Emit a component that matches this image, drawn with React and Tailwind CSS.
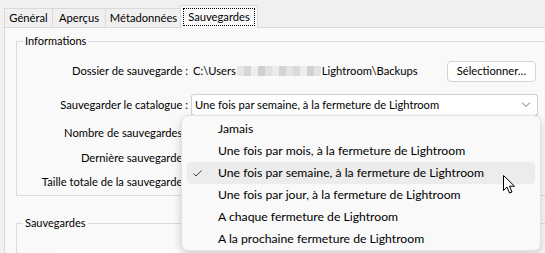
import React from 'react';

const font = { fontFamily: 'Lato, "Noto Sans", sans-serif' };

const tabs = [
    { t: 'Général', w: 'w-[48px]' },
    { t: 'Aperçus', w: 'w-[53px]' },
    { t: 'Métadonnées', w: 'w-[76px]' },
];

const options = [
    'Jamais',
    'Une fois par mois, à la fermeture de Lightroom',
    'Une fois par semaine, à la fermeture de Lightroom',
    'Une fois par jour, à la fermeture de Lightroom',
    'A chaque fermeture de Lightroom',
    'A la prochaine fermeture de Lightroom',
];

// pixelated bit hiding the user name
const blur = ['#e6e6e6', '#d6d6d6', '#eeeeee', '#cfcfcf', '#e1e1e1', '#ebebeb', '#d4d4d4', '#e4e4e4', '#dadada', '#ededed', '#d2d2d2', '#e3e3e3'];

function Row({ label, children, className }) {
    return (
        <div className={`flex items-center h-[22px] ${className}`}>
            <div className="w-[176px] shrink-0 text-right pr-[5px] whitespace-nowrap">{label}</div>
            {children}
        </div>
    );
}

export default function App() {
    return (
        <div className="relative w-[545px] h-[253px] overflow-hidden bg-[#f0f0f0] text-[11.2px] text-black leading-[16px]" style={font}>
            {/* tab strip */}
            <div className="flex items-end h-[27px] pl-[4px]">
                {tabs.map(({ t, w }) => (
                    <div key={t} className={`${w} h-[19px] flex items-center justify-center border-t border-l border-[#d9d9d9] bg-[#f0f0f0]`}>
                        {t}
                    </div>
                ))}
                <div className="relative z-10 w-[78px] h-[23px] -mb-px -ml-px px-[2px] pt-[2px] bg-[#f9f9f9] border border-b-0 border-[#d9d9d9]">
                    <div className="h-[18px] flex items-center justify-center border border-dotted border-black">Sauvegardes</div>
                </div>
            </div>

            {/* tab panel */}
            <div className="ml-[4px] w-[600px] h-[300px] border-l border-t border-[#d9d9d9] bg-[#f9f9f9] pl-[11px] pt-[5px]">
                <fieldset className="w-[560px] h-[163px] border border-[#dcdcdc]">
                    <legend className="ml-[6px] px-[2px] text-[11px]">Informations</legend>
                    <div className="pt-[11px]">
                        <Row label="Dossier de sauvegarde :">
                            <div className="w-[343px] flex items-center">
                                <span>C:\Users</span>
                                <span className="flex h-[10px] mx-[1px]">
                                    {blur.map((c, i) => (
                                        <span key={i} className="w-[7px] h-full" style={{ background: c }} />
                                    ))}
                                </span>
                                <span>Lightroom\Backups</span>
                                <button className="ml-auto w-[89px] h-[21px] bg-white border border-[#d3d3d3] rounded-[4px]">Sélectionner…</button>
                            </div>
                        </Row>
                        <Row label="Sauvegarder le catalogue :" className="mt-[12px]">
                            <div className="-ml-[2px] w-[347px] h-[22px] bg-white border border-[#d0d0d0] border-b-[#8a8a8a] rounded-[3px] flex items-center pl-[3px] pr-[6px]">
                                <span className="flex-1">Une fois par semaine, à la fermeture de Lightroom</span>
                                <svg width="10" height="6" viewBox="0 0 10 6" fill="none" stroke="#707070" strokeWidth="1">
                                    <path d="M1 0.5 L5 4.5 L9 0.5" />
                                </svg>
                            </div>
                        </Row>
                        <Row label="Nombre de sauvegardes :" className="mt-[6px]" />
                        <Row label="Dernière sauvegarde :" className="mt-[3px]" />
                        <Row label="Taille totale de la sauvegarde :" className="mt-[2px]" />
                    </div>
                </fieldset>

                <fieldset className="mt-[19px] w-[560px] h-[80px] border border-[#dcdcdc]">
                    <legend className="ml-[6px] px-[2px] text-[11px]">Sauvegardes</legend>
                    <div className="ml-[38px] mt-[18px] w-[480px] h-[40px] bg-white" />
                </fieldset>
            </div>

            {/* dropdown menu */}
            <div className="absolute left-[181px] top-[115px] w-[360px] h-[136px] py-[2px] px-[5px] bg-[#f9f9f9] border border-[#e2e2e2] rounded-[7px] shadow-[0_4px_10px_rgba(0,0,0,0.18)] text-[12.2px]">
                {options.map((o, i) => (
                    <div key={o} className={`relative h-[22px] flex items-center pl-[31px] rounded-[4px] ${i === 2 ? 'bg-[#ececec]' : ''}`}>
                        {i === 2 && (
                            <svg className="absolute left-[6px] top-[8px]" width="9" height="7" viewBox="0 0 9 7" fill="none" stroke="#444" strokeWidth="1">
                                <path d="M0.5 3.5 L3 6 L8.5 0.5" />
                            </svg>
                        )}
                        {o}
                    </div>
                ))}
            </div>

            {/* mouse cursor */}
            <svg className="absolute left-[503px] top-[175px]" width="13" height="19" viewBox="0 0 13 19">
                <path d="M0.5 0.5 L0.5 15.5 L4 12 L6.5 18 L9 17 L6.5 11.2 L11.5 11.2 Z" fill="#fff" stroke="#000" strokeWidth="1" strokeLinejoin="round" />
            </svg>
        </div>
    );
}
